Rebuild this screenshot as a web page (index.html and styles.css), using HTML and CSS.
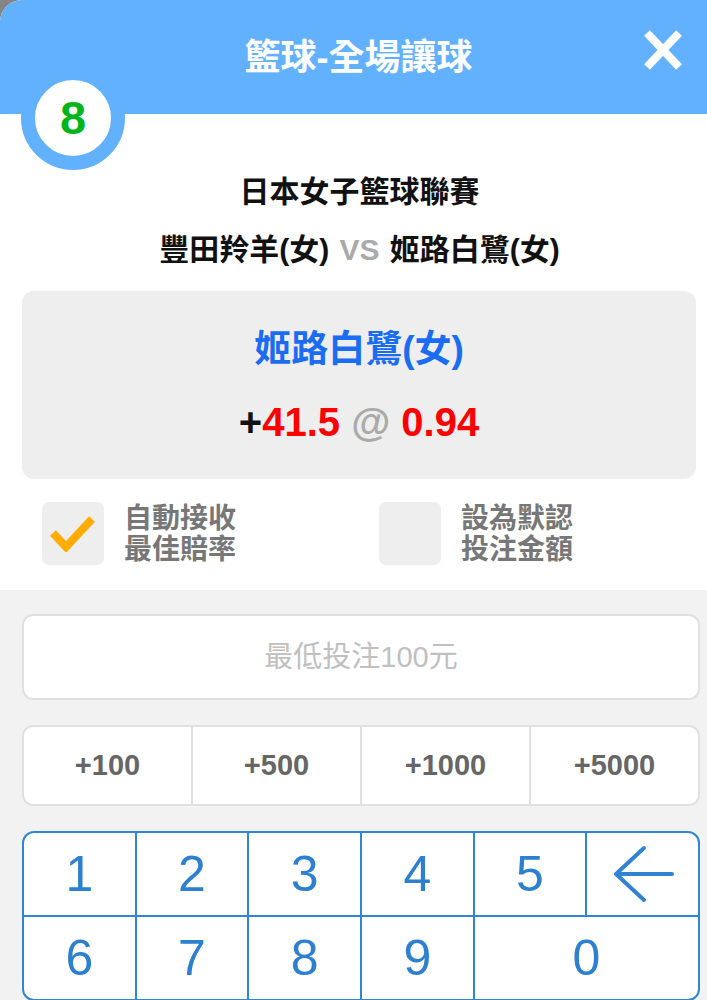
FILE: index.html
```html
<!DOCTYPE html>
<html lang="zh-Hant">
<head>
	<meta charset="UTF-8">
	<meta name="viewport" content="width=device-width, initial-scale=1.0">
	<title>籃球-全場讓球</title>
	<link rel="stylesheet" href="styles.css">
</head>
<body>
	<div class="modal">
		<header class="head">
			<h1 class="head-title">籃球-全場讓球</h1>
			<button class="close" type="button" aria-label="close">
				<svg width="40" height="42" viewBox="0 0 40 42">
					<path d="M4 4 L36 38 M36 4 L4 38" stroke="#fff" stroke-width="8" fill="none"/>
				</svg>
			</button>
			<div class="badge">8</div>
		</header>

		<section class="match">
			<p class="league">日本女子籃球聯賽</p>
			<p class="teams">豐田羚羊(女) <span class="vs">VS</span> 姬路白鷺(女)</p>
		</section>

		<section class="pick">
			<p class="pick-team">姬路白鷺(女)</p>
			<p class="pick-odds"><span class="sign">+</span><span class="red">41.5</span> <span class="at">@</span> <span class="red">0.94</span></p>
		</section>

		<section class="options">
			<label class="opt">
				<span class="opt-box">
					<svg width="46" height="36" viewBox="0 0 46 36">
						<path d="M3 17 L16 31 L42 3" stroke="#ffab00" stroke-width="8" fill="none"/>
					</svg>
				</span>
				<span class="opt-text">自動接收<br>最佳賠率</span>
			</label>
			<label class="opt">
				<span class="opt-box"></span>
				<span class="opt-text">設為默認<br>投注金額</span>
			</label>
		</section>

		<section class="bet">
			<div class="amount">最低投注100元</div>
			<div class="chips">
				<div class="chip">+100</div>
				<div class="chip">+500</div>
				<div class="chip">+1000</div>
				<div class="chip">+5000</div>
			</div>
			<div class="keypad">
				<div class="key">1</div>
				<div class="key">2</div>
				<div class="key">3</div>
				<div class="key">4</div>
				<div class="key">5</div>
				<div class="key">
					<svg width="62" height="58" viewBox="0 0 62 58">
						<path d="M4 29 H60 M32 3 L4 29 L32 55" stroke="#2f82d4" stroke-width="4" stroke-linecap="round" stroke-linejoin="round" fill="none"/>
					</svg>
				</div>
				<div class="key">6</div>
				<div class="key">7</div>
				<div class="key">8</div>
				<div class="key">9</div>
				<div class="key key-wide">0</div>
			</div>
		</section>
	</div>
</body>
</html>
```

FILE: styles.css
```css
body {
	margin: 0;
	padding: 0;
	background-color: #858585;
	font-family: "Liberation Sans", "Noto Sans CJK TC", sans-serif;
}
p {
	margin: 0;
}
.modal {
	background-color: #fff;
	border-top-left-radius: 22px;
	overflow: hidden;
}
.head {
	position: relative;
	height: 114px;
	background-color: #62b1ff;
}
.head-title {
	margin: 0;
	padding: 40px 0 0 10px;
	font-size: 36px;
	line-height: 36px;
	font-weight: bold;
	color: #fff;
	text-align: center;
}
.close {
	position: absolute;
	top: 29px;
	right: 24px;
	padding: 0;
	border: 0;
	background: none;
	line-height: 0;
}
.badge {
	position: absolute;
	left: 21px;
	top: 66px;
	width: 76px;
	height: 76px;
	border: 14px solid #62b1ff;
	border-radius: 50%;
	background-color: #fff;
	color: #00b51a;
	font-size: 47px;
	font-weight: bold;
	line-height: 76px;
	text-align: center;
}
.match {
	padding: 59px 0 0 12px;
	text-align: center;
	font-weight: bold;
	color: #111;
}
.league {
	font-size: 30px;
	line-height: 38px;
}
.teams {
	margin-top: 20px;
	font-size: 30px;
	line-height: 38px;
	word-spacing: 2px;
}
.vs {
	color: #aaa;
}
.pick {
	margin: 22px 11px 0 22px;
	height: 188px;
	border-radius: 12px;
	background-color: #eeeeee;
	text-align: center;
	font-weight: bold;
	box-sizing: border-box;
	padding-top: 36px;
}
.pick-team {
	font-size: 37px;
	line-height: 46px;
	color: #1a6cf2;
}
.pick-odds {
	margin-top: 26px;
	font-size: 40px;
	line-height: 46px;
	color: #111;
}
.pick-odds .red {
	color: #ff0000;
}
.pick-odds .at {
	color: #aaa;
}
.options {
	display: grid;
	grid-template-columns: 337px 1fr;
	padding: 23px 0 25px 42px;
}
.opt {
	display: flex;
	align-items: center;
	gap: 20px;
}
.opt-box {
	display: flex;
	align-items: center;
	justify-content: center;
	width: 62px;
	height: 63px;
	border-radius: 7px;
	background-color: #eeeeee;
}
.opt-text {
	font-size: 28px;
	line-height: 31px;
	font-weight: bold;
	color: #777;
}
.bet {
	background-color: #f2f2f2;
	padding: 24px 7px 20px 22px;
}
.amount {
	height: 82px;
	border: 2px solid #e0e0e0;
	border-radius: 11px;
	background-color: #fff;
	color: #c0c0c0;
	font-size: 29px;
	line-height: 82px;
	text-align: center;
}
.chips {
	display: grid;
	grid-template-columns: repeat(4, 1fr);
	gap: 2px;
	margin-top: 25px;
	border: 2px solid #e0e0e0;
	border-radius: 11px;
	background-color: #e0e0e0;
	overflow: hidden;
}
.chip {
	height: 77px;
	background-color: #fff;
	color: #666;
	font-size: 29px;
	font-weight: bold;
	line-height: 77px;
	text-align: center;
}
.keypad {
	display: grid;
	grid-template-columns: repeat(6, 1fr);
	gap: 2px;
	margin-top: 25px;
	border: 2px solid #2f86d6;
	border-radius: 12px;
	background-color: #2f86d6;
	overflow: hidden;
}
.key {
	display: flex;
	align-items: center;
	justify-content: center;
	height: 82px;
	background-color: #fff;
	color: #2d7fd0;
	font-size: 50px;
}
.key-wide {
	grid-column: span 2;
}
```
